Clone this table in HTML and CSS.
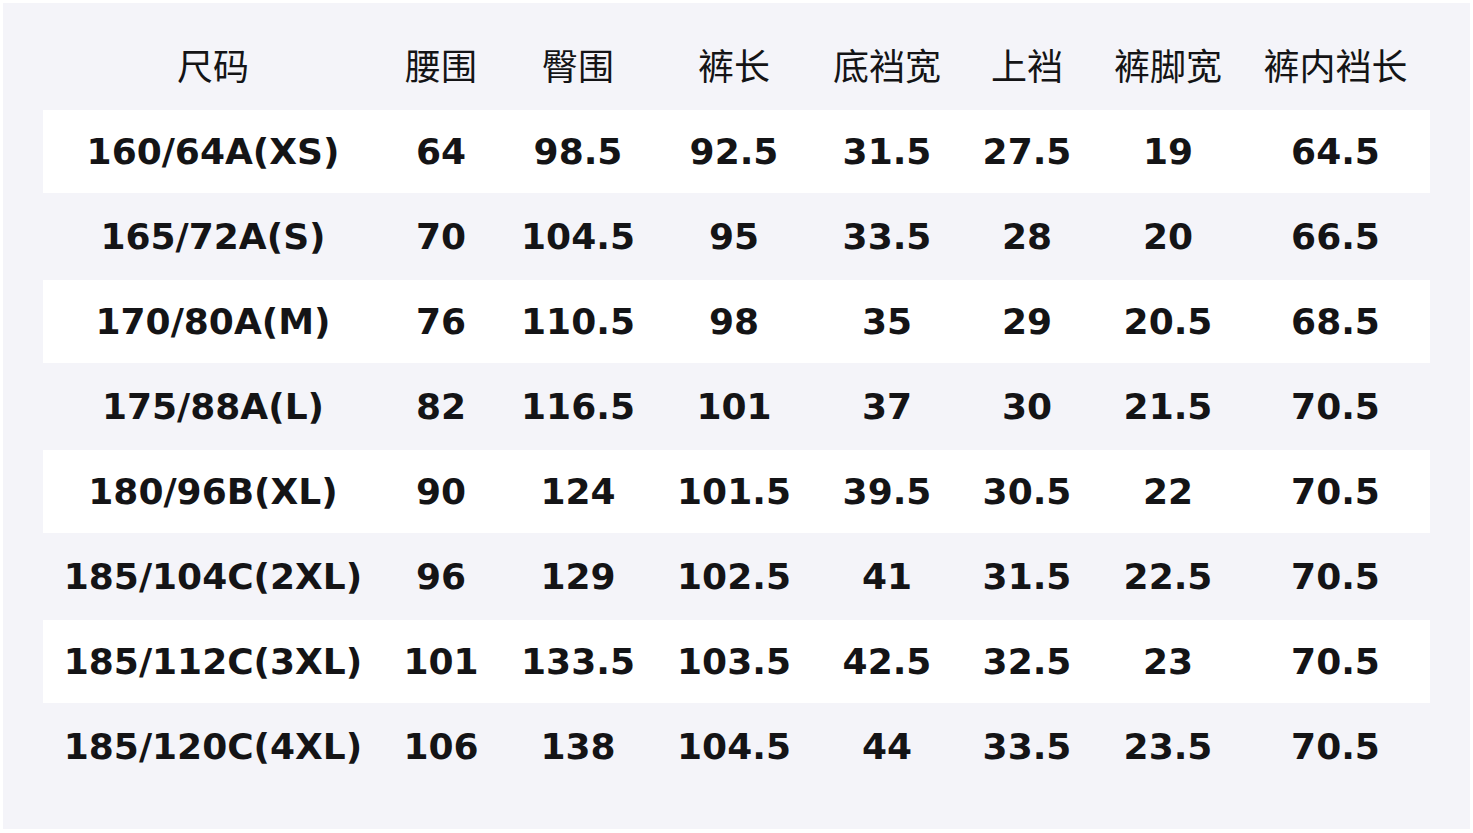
FILE: index.html
```html
<!DOCTYPE html>
<html lang="zh">
<head>
<meta charset="utf-8">
<title>尺码表</title>
<link rel="stylesheet" href="styles.css">
</head>
<body>
<div class="panel">
  <div class="row head">
    <div>尺码</div><div>腰围</div><div>臀围</div><div>裤长</div><div>底裆宽</div><div>上裆</div><div>裤脚宽</div><div>裤内裆长</div>
  </div>
  <div class="row white"><div>160/64A(XS)</div><div>64</div><div>98.5</div><div>92.5</div><div>31.5</div><div>27.5</div><div>19</div><div>64.5</div></div>
  <div class="row"><div>165/72A(S)</div><div>70</div><div>104.5</div><div>95</div><div>33.5</div><div>28</div><div>20</div><div>66.5</div></div>
  <div class="row white"><div>170/80A(M)</div><div>76</div><div>110.5</div><div>98</div><div>35</div><div>29</div><div>20.5</div><div>68.5</div></div>
  <div class="row"><div>175/88A(L)</div><div>82</div><div>116.5</div><div>101</div><div>37</div><div>30</div><div>21.5</div><div>70.5</div></div>
  <div class="row white"><div>180/96B(XL)</div><div>90</div><div>124</div><div>101.5</div><div>39.5</div><div>30.5</div><div>22</div><div>70.5</div></div>
  <div class="row"><div>185/104C(2XL)</div><div>96</div><div>129</div><div>102.5</div><div>41</div><div>31.5</div><div>22.5</div><div>70.5</div></div>
  <div class="row white"><div>185/112C(3XL)</div><div>101</div><div>133.5</div><div>103.5</div><div>42.5</div><div>32.5</div><div>23</div><div>70.5</div></div>
  <div class="row"><div>185/120C(4XL)</div><div>106</div><div>138</div><div>104.5</div><div>44</div><div>33.5</div><div>23.5</div><div>70.5</div></div>
</div>
</body>
</html>
```
FILE: styles.css
```css
html, body {
  margin: 0;
  padding: 0;
  background: #ffffff;
}
body {
  padding: 3px;
}
.panel {
  width: 1467px;
  height: 826px;
  box-sizing: border-box;
  background: #f4f4f9;
  padding: 22px 40px 0 40px;
  display: flex;
  flex-direction: column;
  gap: 2px;
}
.row {
  display: grid;
  grid-template-columns: 340px 116px 158px 154px 152px 128px 154px 181px 1fr;
  height: 83px;
  align-items: center;
  font-family: "DejaVu Sans", "Noto Sans CJK SC", sans-serif;
  font-weight: bold;
  font-size: 36px;
  color: #141416;
  white-space: nowrap;
}
.row > div {
  text-align: center;
}
.row.white {
  background: #ffffff;
}
.row.head {
  font-family: "Noto Sans CJK SC", sans-serif;
  font-weight: 400;
  font-size: 36px;
  color: #141416;
  box-sizing: border-box;
  padding-bottom: 6px;
}
```
